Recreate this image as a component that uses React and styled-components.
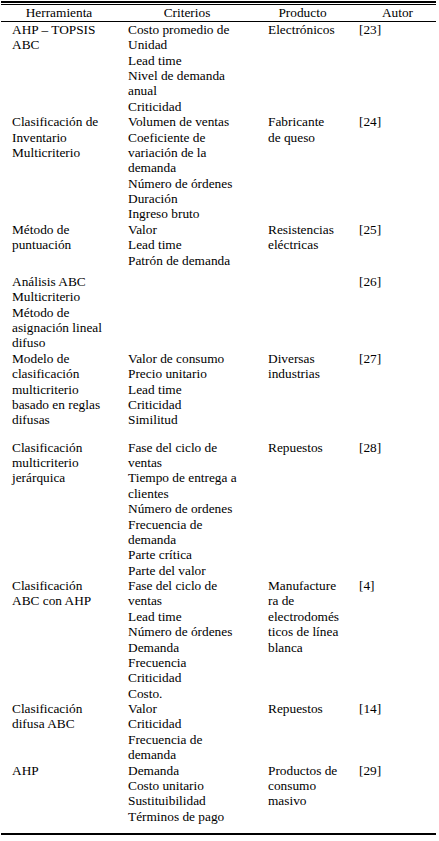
import React from 'react';
import styled, { createGlobalStyle } from 'styled-components';

const GlobalStyle = createGlobalStyle`
  html, body {
    margin: 0;
    padding: 0;
    background: #fff;
  }
  body {
    font-family: "Liberation Serif", "Times New Roman", serif;
    color: #000;
  }
`;

const Page = styled.div`
  width: 439px;
  min-height: 841px;
  padding-top: 1px;
  box-sizing: border-box;
`;

/* Table with a double rule on top and a heavy rule at the bottom */
const Table = styled.div`
  margin-left: 1px;
  width: 435px;
  border-top: 2px solid #000;
  border-bottom: 2.5px solid #000;
  padding-bottom: 9px;
  font-size: 13.33px;
  line-height: 15.37px;
`;

const Row = styled.div`
  display: grid;
  grid-template-columns: 116px 140px 91px 1fr;
  margin-top: ${(p) => p.$space || 0}px;
`;

const HeadRow = styled(Row)`
  margin-top: 1px;
  border-top: 1px solid #000;
  border-bottom: 1px solid #000;
  padding-bottom: 0.5px;
`;

const HeadCell = styled.div`
  padding: 0 ${(p) => (p.$last ? 0 : 11)}px 0 11px;
  text-align: center;
`;

const Cell = styled.div`
  padding: 0 ${(p) => (p.$last ? 0 : 11)}px 0 11px;
`;

const Line = styled.div`
  white-space: nowrap;
`;

const headers = ['Herramienta', 'Criterios', 'Producto', 'Autor'];

const rows = [
  {
    tool: ['AHP – TOPSIS', 'ABC'],
    criteria: ['Costo promedio de', 'Unidad', 'Lead time', 'Nivel de demanda', 'anual', 'Criticidad'],
    product: ['Electrónicos'],
    ref: '[23]',
  },
  {
    tool: ['Clasificación de', 'Inventario', 'Multicriterio'],
    criteria: [
      'Volumen de ventas',
      'Coeficiente de',
      'variación de la',
      'demanda',
      'Número de órdenes',
      'Duración',
      'Ingreso bruto',
    ],
    product: ['Fabricante', 'de queso'],
    ref: '[24]',
  },
  {
    tool: ['Método de', 'puntuación'],
    criteria: ['Valor', 'Lead time', 'Patrón de demanda'],
    product: ['Resistencias', 'eléctricas'],
    ref: '[25]',
  },
  {
    space: 6,
    tool: ['Análisis ABC', 'Multicriterio', 'Método de', 'asignación lineal', 'difuso'],
    criteria: [],
    product: [],
    ref: '[26]',
  },
  {
    tool: ['Modelo de', 'clasificación', 'multicriterio', 'basado en reglas', 'difusas'],
    criteria: ['Valor de consumo', 'Precio unitario', 'Lead time', 'Criticidad', 'Similitud'],
    product: ['Diversas', 'industrias'],
    ref: '[27]',
  },
  {
    space: 12,
    tool: ['Clasificación', 'multicriterio', 'jerárquica'],
    criteria: [
      'Fase del ciclo de',
      'ventas',
      'Tiempo de entrega a',
      'clientes',
      'Número de ordenes',
      'Frecuencia de',
      'demanda',
      'Parte crítica',
      'Parte del valor',
    ],
    product: ['Repuestos'],
    ref: '[28]',
  },
  {
    tool: ['Clasificación', 'ABC con AHP'],
    criteria: [
      'Fase del ciclo de',
      'ventas',
      'Lead time',
      'Número de órdenes',
      'Demanda',
      'Frecuencia',
      'Criticidad',
      'Costo.',
    ],
    product: ['Manufacture', 'ra de', 'electrodomés', 'ticos de línea', 'blanca'],
    ref: '[4]',
  },
  {
    tool: ['Clasificación', 'difusa ABC'],
    criteria: ['Valor', 'Criticidad', 'Frecuencia de', 'demanda'],
    product: ['Repuestos'],
    ref: '[14]',
  },
  {
    tool: ['AHP'],
    criteria: ['Demanda', 'Costo unitario', 'Sustituibilidad', 'Términos de pago'],
    product: ['Productos de', 'consumo', 'masivo'],
    ref: '[29]',
  },
];

function Lines({ items }) {
  return items.map((t, i) => <Line key={i}>{t}</Line>);
}

export default function App() {
  return (
    <Page>
      <GlobalStyle />
      <Table>
        <HeadRow>
          {headers.map((h, i) => (
            <HeadCell key={h} $last={i === headers.length - 1}>
              {h}
            </HeadCell>
          ))}
        </HeadRow>
        {rows.map((r, i) => (
          <Row key={i} $space={r.space}>
            <Cell>
              <Lines items={r.tool} />
            </Cell>
            <Cell>
              <Lines items={r.criteria} />
            </Cell>
            <Cell>
              <Lines items={r.product} />
            </Cell>
            <Cell $last>
              <Line>{r.ref}</Line>
            </Cell>
          </Row>
        ))}
      </Table>
    </Page>
  );
}
